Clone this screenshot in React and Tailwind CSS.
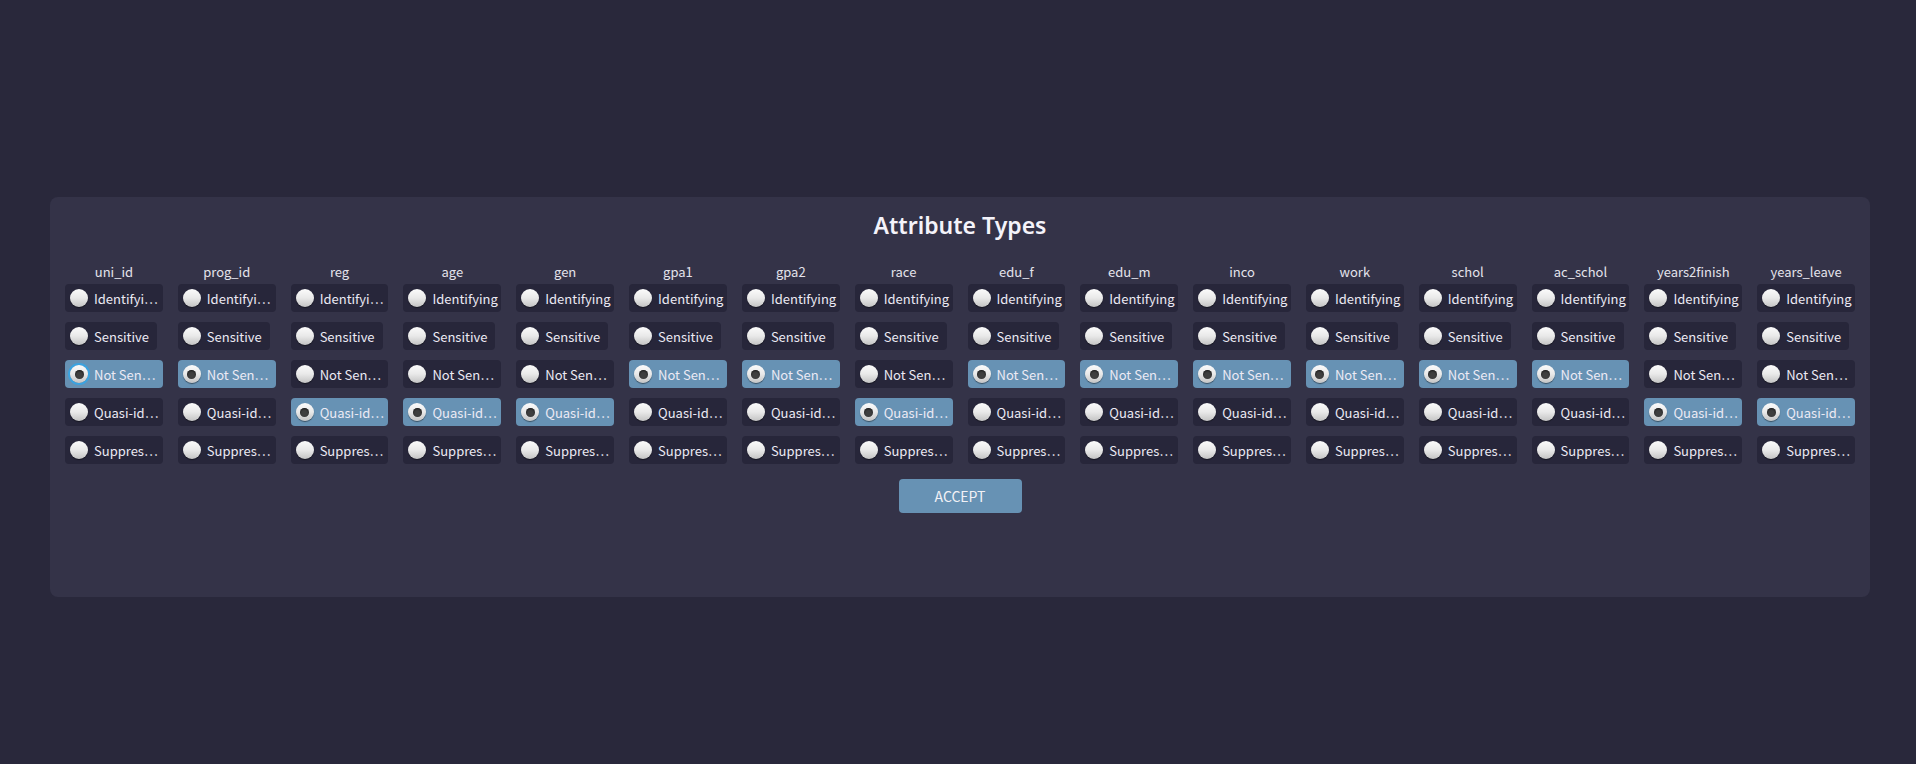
import React from "react";

const columns = [
  { name: "uni_id", pick: 2, focus: true, shortId: true },
  { name: "prog_id", pick: 2, shortId: true },
  { name: "reg", pick: 3, shortId: true },
  { name: "age", pick: 3 },
  { name: "gen", pick: 3 },
  { name: "gpa1", pick: 2 },
  { name: "gpa2", pick: 2 },
  { name: "race", pick: 3 },
  { name: "edu_f", pick: 2 },
  { name: "edu_m", pick: 2 },
  { name: "inco", pick: 2 },
  { name: "work", pick: 2 },
  { name: "schol", pick: 2 },
  { name: "ac_schol", pick: 2 },
  { name: "years2finish", pick: 3 },
  { name: "years_leave", pick: 3 },
];

function Radio({ checked, focus }) {
  return (
    <span
      className={
        "relative flex h-[18px] w-[18px] shrink-0 items-center justify-center rounded-full bg-gradient-to-b from-[#fbfbfb] via-[#e9e9e9] to-[#c4c4c4] shadow-[0_1px_1px_rgba(0,0,0,0.45)] " +
        (focus ? "ring-2 ring-[#3ba3e0]" : "")
      }
    >
      {checked && (
        <span className="h-[9px] w-[9px] rounded-full bg-[#3f3f3f] shadow-[inset_0_1px_2px_rgba(0,0,0,0.6)]" />
      )}
    </span>
  );
}

function Option({ label, checked, focus, fit }) {
  return (
    <div
      className={
        "flex h-[28px] items-center gap-[6px] rounded-[4px] pl-[5px] pr-[8px] " +
        (fit ? "w-fit " : "w-full ") +
        (checked ? "bg-[#6792b4]" : "bg-[#27263a]")
      }
    >
      <Radio checked={checked} focus={focus && checked} />
      <span className="whitespace-nowrap text-[13px] leading-none text-[#eceaf4]">{label}</span>
    </div>
  );
}

export default function App() {
  return (
    <div
      className="min-h-[764px] bg-[#29283b] pl-[50px] pr-[46px] pt-[197px]"
      style={{ fontFamily: '"Noto Sans CJK JP", "Noto Sans", sans-serif' }}
    >
      <div className="flex h-[400px] flex-col items-center rounded-[8px] bg-[#343348] px-[15px] pt-[12px]">
        <h1
          className="h-[32px] text-[23px] font-semibold leading-[32px] text-[#f4f3fa]"
          style={{ fontFamily: '"Noto Sans", "Open Sans", sans-serif' }}
        >
          Attribute Types
        </h1>

        <div className="mt-[22px] grid w-full grid-cols-16 gap-x-[15px]">
          {columns.map((col) => {
            const labels = [
              col.shortId ? "Identifyi…" : "Identifying",
              "Sensitive",
              "Not Sen…",
              "Quasi-id…",
              "Suppres…",
            ];
            return (
              <div key={col.name} className="flex flex-col">
                <div className="mb-[3px] h-[18px] text-center text-[13px] leading-[18px] text-[#e4e3ec]">
                  {col.name}
                </div>
                <div className="flex flex-col gap-[10px]">
                  {labels.map((label, i) => (
                    <Option
                      key={i}
                      label={label}
                      checked={col.pick === i}
                      focus={col.focus}
                      fit={i === 1}
                    />
                  ))}
                </div>
              </div>
            );
          })}
        </div>

        <button className="mt-[15px] h-[34px] w-[123px] rounded-[4px] bg-[#6792b4] text-[14px] uppercase text-[#f1f1f6]">
          Accept
        </button>
      </div>
    </div>
  );
}
